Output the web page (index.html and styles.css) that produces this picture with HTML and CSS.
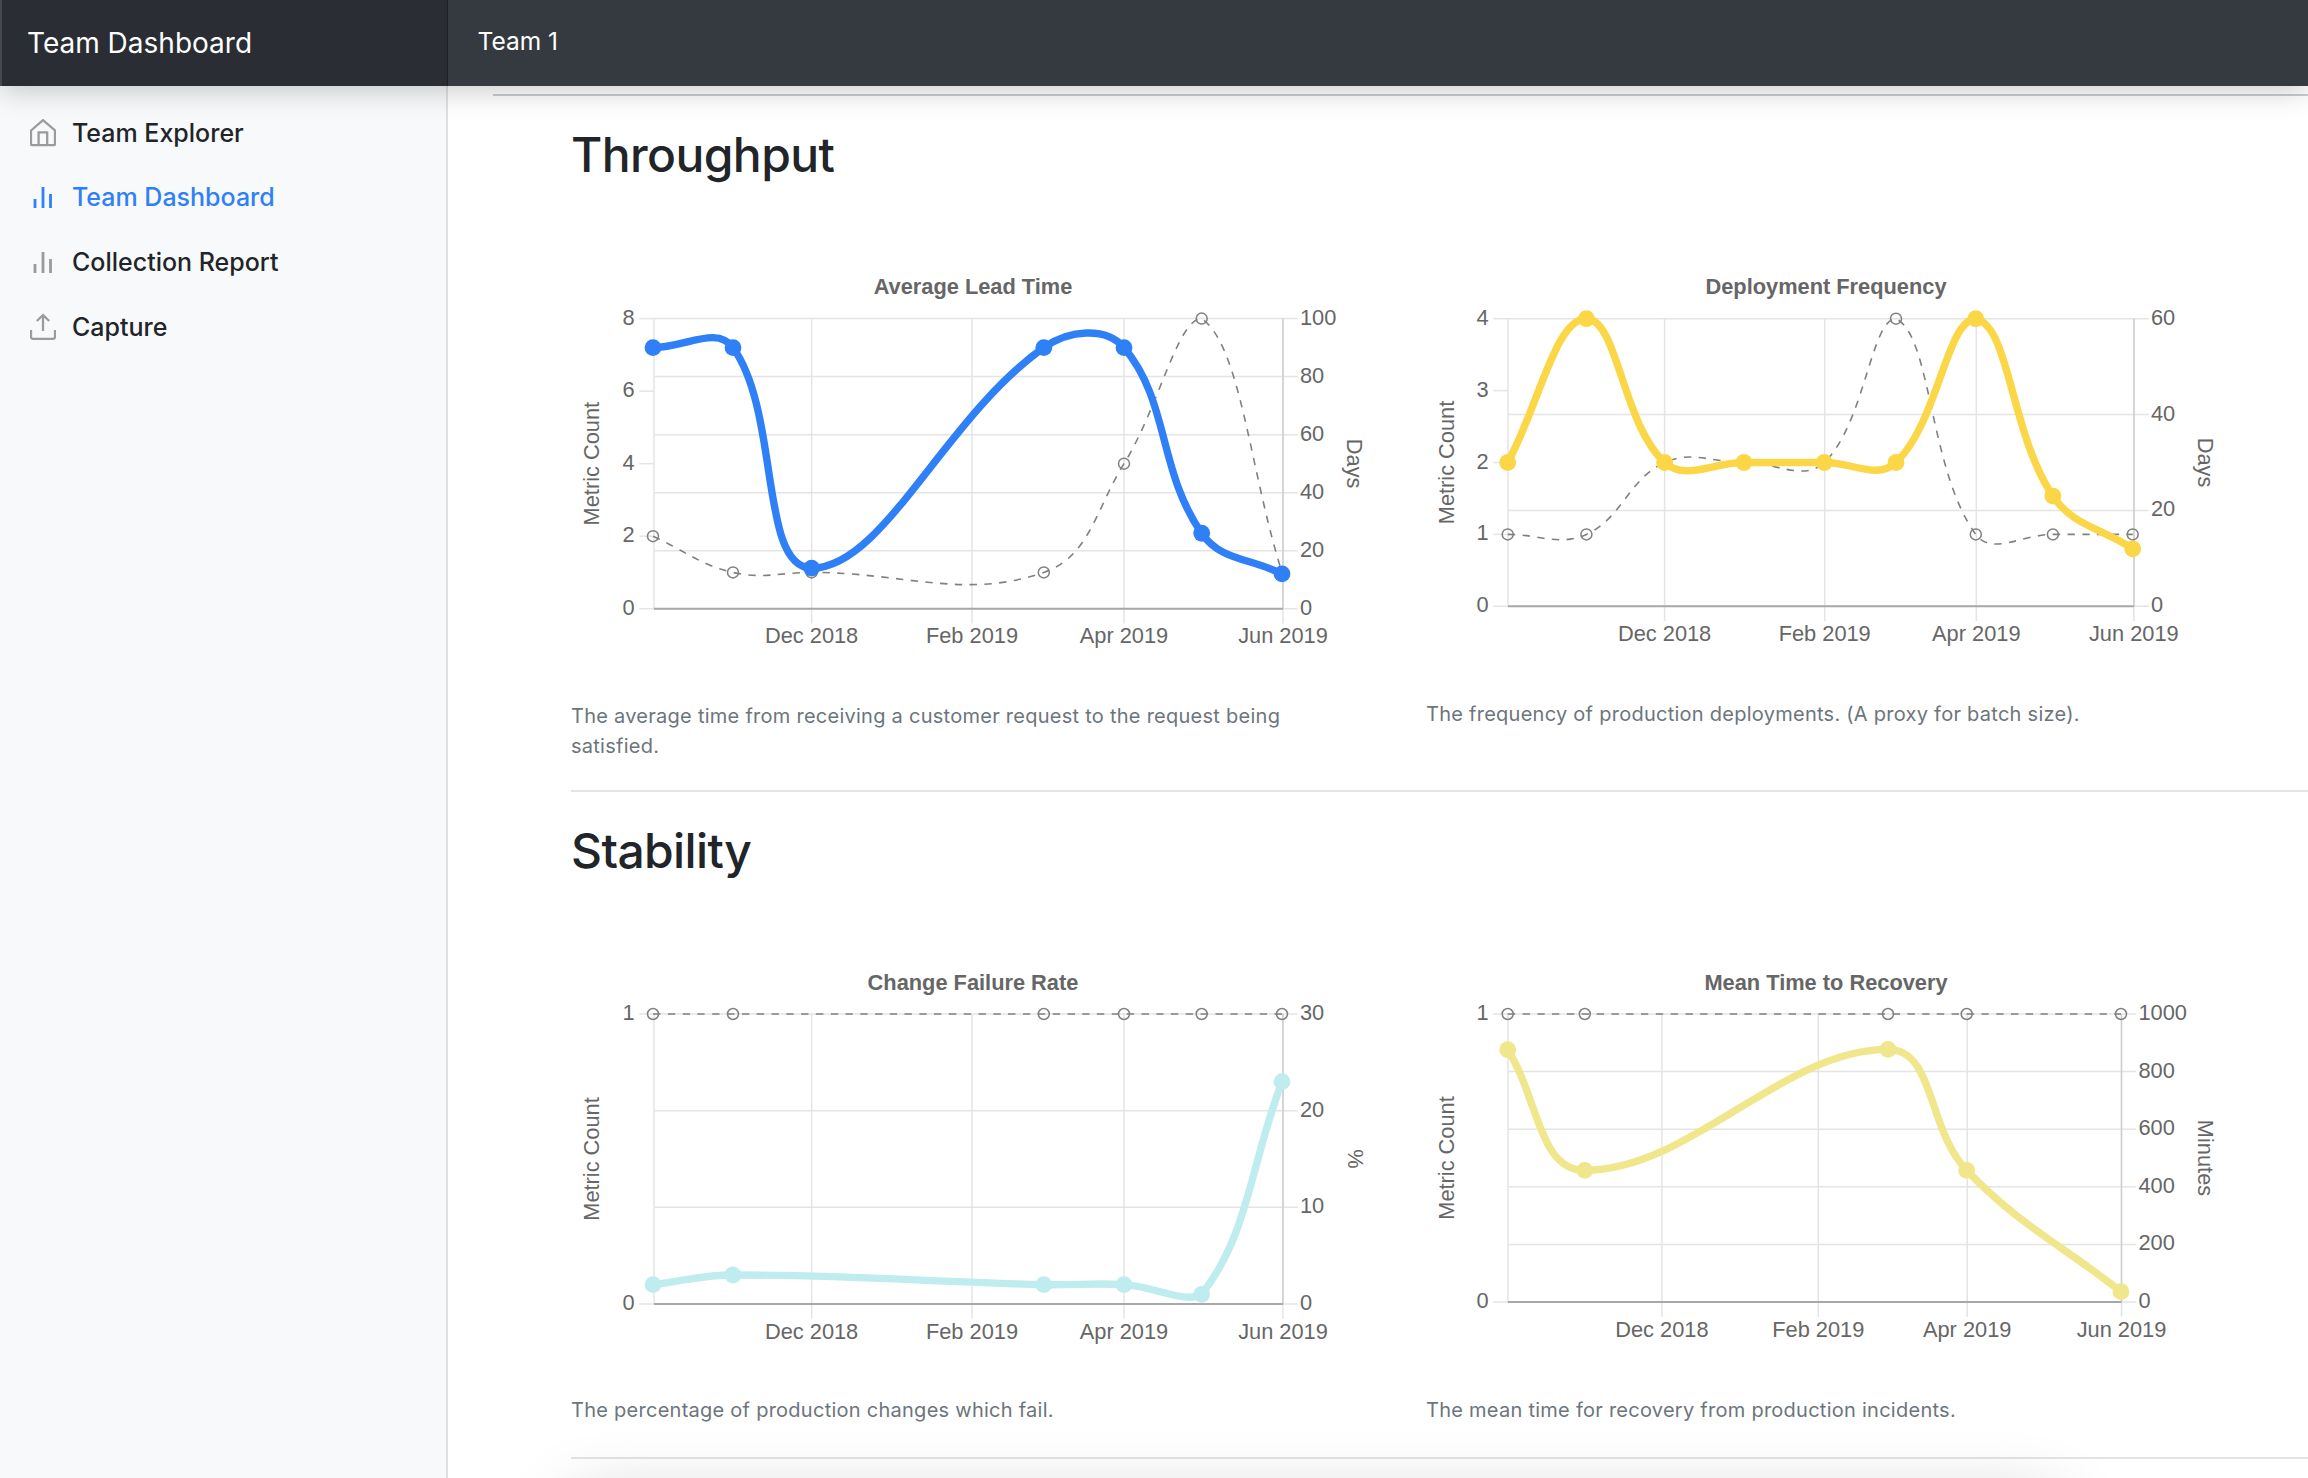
FILE: index.html
```html
<!DOCTYPE html>
<html lang="en">
	<head>
		<meta charset="UTF-8" />
		<title>Team Dashboard</title>
		<link rel="stylesheet" href="styles.css">
	</head>
	<body>
		<header class="topbar">
			<div class="brand">Team Dashboard</div>
			<div class="team-name">Team 1</div>
		</header>

		<div class="layout">
			<aside class="sidebar">
				<a class="nav-link" href="#">
					<svg class="nav-icon" viewBox="0 0 26 28"><path d="M1 11.5 13 1.2 25 11.5V25a1.2 1.2 0 0 1-1.2 1.2H2.2A1.2 1.2 0 0 1 1 25Z" /><path d="M8.6 26V13.4h8.6V26" /></svg>
					Team Explorer
				</a>
				<a class="nav-link active" href="#">
					<svg class="nav-icon" viewBox="0 0 26 28"><path class="bars" d="M5 25v-9M13 25V4M20.5 25V11" /></svg>
					Team Dashboard
				</a>
				<a class="nav-link" href="#">
					<svg class="nav-icon" viewBox="0 0 26 28"><path class="bars" d="M5 25v-9M13 25V4M20.5 25V11" /></svg>
					Collection Report
				</a>
				<a class="nav-link capture" href="#">
					<svg class="nav-icon" viewBox="0 0 26 28"><path d="M1 17v7a1.8 1.8 0 0 0 1.8 1.8h20.4A1.8 1.8 0 0 0 25 24v-7" /><path d="M13 18V2M6.8 8 13 2l6.2 6" /></svg>
					Capture
				</a>
			</aside>

			<main class="content">
				<div class="top-rule"></div>

				<section class="metrics">
					<h2>Throughput</h2>
					<div class="chart-row">
						<div class="chart-col">
							<div id="lead-time"></div>
							<p class="description">The average time from receiving a customer request to the request being satisfied.</p>
						</div>
						<div class="chart-col">
							<div id="deploy-freq"></div>
							<p class="description">The frequency of production deployments. (A proxy for batch size).</p>
						</div>
					</div>
				</section>
				<hr />

				<section class="metrics stability">
					<h2>Stability</h2>
					<div class="chart-row">
						<div class="chart-col">
							<div id="failure-rate"></div>
							<p class="description">The percentage of production changes which fail.</p>
						</div>
						<div class="chart-col">
							<div id="recovery"></div>
							<p class="description">The mean time for recovery from production incidents.</p>
						</div>
					</div>
				</section>
				<hr />
			</main>
		</div>

		<div class="next-card"></div>

		<script src="charts.js"></script>
	</body>
</html>
```
FILE: styles.css
```css
body {
	margin: 0;
	height: 100vh;
	overflow: hidden;
	font-family: Inter, "Noto Sans", sans-serif;
	color: #212529;
	background: #fff;
}
.topbar {
	position: relative;
	z-index: 2;
	display: flex;
	height: 86px;
	background: #343a40;
	color: #fff;
	box-shadow: 0 4px 30px rgba(0, 0, 0, 0.22);
}
.brand {
	box-sizing: border-box;
	width: 448px;
	padding: 27px 0 0 25px;
	font-size: 28px;
	line-height: 33px;
	background: #2a2d33;
	border-left: 2px solid #45494f;
	box-shadow: inset -1px 0 0 rgba(0, 0, 0, 0.25);
}
.team-name {
	padding: 25px 0 0 29.5px;
	font-size: 24.5px;
	line-height: 32px;
}
.layout {
	display: flex;
	height: calc(100vh - 86px);
}
.sidebar {
	box-sizing: border-box;
	flex: 0 0 448px;
	padding-top: 15px;
	background: #f8f9fa;
	border-right: 2px solid #dee0e2;
}
.nav-link {
	display: flex;
	align-items: center;
	gap: 16px;
	height: 64.3px;
	padding-left: 30px;
	font-size: 25px;
	font-weight: 500;
	color: #212529;
	text-decoration: none;
}
.nav-link.active {
	color: #2f80f7;
}
.nav-link.capture {
	margin-top: 1px;
}
.nav-icon {
	width: 26px;
	height: 28px;
	flex: none;
	fill: none;
	stroke: #9b9b9b;
	stroke-width: 2.3;
}
.nav-icon .bars {
	stroke-width: 2.8;
}
.active .nav-icon {
	stroke: #2f80f7;
}
.content {
	flex: 1;
	min-width: 0;
	padding-left: 123px;
}
.top-rule {
	height: 2px;
	margin: 8px 0 0 -78px;
	background: #c9ced3;
}
.metrics {
	padding-top: 29px;
}
.metrics h2 {
	margin: 0 0 78px;
	font-size: 48px;
	line-height: 60px;
	font-weight: 500;
	letter-spacing: -0.6px;
}
.chart-row {
	display: grid;
	grid-template-columns: 855px 855px;
	align-items: start;
}
.chart-col svg {
	display: block;
}
.description {
	max-width: 760px;
	margin: 37px 0 0;
	font-size: 20px;
	line-height: 29.5px;
	letter-spacing: 0.26px;
	color: #6c757d;
}
hr {
	height: 2px;
	margin: 29px 0 0;
	border: 0;
	background: #e3e4e5;
}
.stability + hr {
	margin-top: 31px;
}
.grid-line {
	stroke: #e4e4e4;
	stroke-width: 1.5;
}
.axis-line {
	stroke: #a8a8a8;
	stroke-width: 2;
}
.right-axis {
	stroke: #cfcfcf;
	stroke-width: 1.5;
}
.tick,
.axis-title,
.chart-title {
	font-family: "Liberation Sans", Arial, sans-serif;
	fill: #666;
	font-size: 21.8px;
}
.tick {
	dominant-baseline: central;
}
.axis-title {
	text-anchor: middle;
	dominant-baseline: central;
}
.chart-title {
	font-weight: 700;
	text-anchor: middle;
	dominant-baseline: central;
}
.compare-line {
	fill: none;
	stroke: #808080;
	stroke-width: 1.6;
	stroke-dasharray: 7.4 7.4;
}
.compare-point {
	fill: none;
	stroke: #808080;
	stroke-width: 1.5;
}
.main-line {
	fill: none;
	stroke-width: 7.4;
}
.next-card {
	position: fixed;
	left: 570px;
	right: 250px;
	top: 1500px;
	height: 200px;
	background: #fff;
	box-shadow: 0 0 70px rgba(0, 0, 0, 0.2);
}
```
FILE: charts.js
```js
// plot box and points are in canvas pixels, values are on the axes named below
const charts = [
	{
		id: "lead-time",
		title: "Average Lead Time",
		size: [804, 402],
		plot: { left: 83, right: 712, top: 55.6, bottom: 345.7 },
		months: [240.6, 401, 553, 712],
		xs: [82, 162, 240.6, 472.8, 553, 630.7, 711],
		leftTicks: [0, 2, 4, 6, 8],
		rightTicks: [0, 20, 40, 60, 80, 100],
		rightTitle: "Days",
		rightTitleX: 783,
		color: "#2f80f7",
		main: [90, 90, 14, 90, 90, 26, 12],
		compare: [2, 1, 1, 1, 4, 8, 1],
	},
	{
		id: "deploy-freq",
		title: "Deployment Frequency",
		size: [800, 400],
		plot: { left: 82, right: 708, top: 55.7, bottom: 343.3 },
		months: [238.6, 398.7, 550.3, 707.8],
		xs: [81.7, 160.4, 238.6, 317.9, 398.2, 470, 549.8, 626.9, 706.7],
		leftTicks: [0, 1, 2, 3, 4],
		rightTicks: [0, 20, 40, 60],
		rightTitle: "Days",
		rightTitleX: 779,
		color: "#fbd748",
		main: [30, 60, 30, 30, 30, 30, 60, 23, 12],
		compare: [1, 1, 2, 2, 2, 4, 1, 1, 1],
	},
	{
		id: "failure-rate",
		title: "Change Failure Rate",
		size: [804, 400],
		plot: { left: 83, right: 712, top: 55, bottom: 345 },
		months: [240.6, 401, 553, 712],
		xs: [82, 162, 472.8, 553, 630.7, 711],
		leftTicks: [0, 1],
		rightTicks: [0, 10, 20, 30],
		rightTitle: "%",
		rightTitleX: 784,
		color: "#bfecee",
		main: [2, 3, 2, 2, 1, 23],
		compare: [1, 1, 1, 1, 1, 1],
	},
	{
		id: "recovery",
		title: "Mean Time to Recovery",
		size: [800, 400],
		plot: { left: 82, right: 695.5, top: 55, bottom: 343 },
		months: [235.9, 392.3, 541.2, 695.5],
		xs: [81.7, 158.8, 462, 540.7, 695],
		leftTicks: [0, 1],
		rightTicks: [0, 200, 400, 600, 800, 1000],
		rightTitle: "Minutes",
		rightTitleX: 779,
		color: "#f0e68c",
		main: [876, 457, 877, 457, 36],
		compare: [1, 1, 1, 1, 1],
	},
];

const monthNames = ["Dec 2018", "Feb 2019", "Apr 2019", "Jun 2019"];
const tickLength = 14.7;
const labelLift = 1.5;

// same spline as the chart library, tension 0.4
function smoothPath(points, plot) {
	let d = "M" + points[0].x + " " + points[0].y;
	const controls = points.map((p, i) => {
		const prev = points[i - 1] || p;
		const next = points[i + 1] || p;
		const d01 = Math.hypot(p.x - prev.x, p.y - prev.y);
		const d12 = Math.hypot(next.x - p.x, next.y - p.y);
		const total = d01 + d12 || 1;
		const clamp = (y) => Math.min(plot.bottom, Math.max(plot.top, y));
		return {
			before: {
				x: p.x - (0.4 * d01 * (next.x - prev.x)) / total,
				y: clamp(p.y - (0.4 * d01 * (next.y - prev.y)) / total),
			},
			after: {
				x: p.x + (0.4 * d12 * (next.x - prev.x)) / total,
				y: clamp(p.y + (0.4 * d12 * (next.y - prev.y)) / total),
			},
		};
	});
	for (let i = 1; i < points.length; i++) {
		const a = controls[i - 1].after;
		const b = controls[i].before;
		d += ` C${a.x} ${a.y} ${b.x} ${b.y} ${points[i].x} ${points[i].y}`;
	}
	return d;
}

function line(x1, y1, x2, y2, cls) {
	return `<line class="${cls}" x1="${x1}" y1="${y1}" x2="${x2}" y2="${y2}" />`;
}

function drawChart(c) {
	const p = c.plot;
	const height = p.bottom - p.top;
	const leftMax = c.leftTicks[c.leftTicks.length - 1];
	const rightMax = c.rightTicks[c.rightTicks.length - 1];
	const leftY = (v) => p.bottom - (v / leftMax) * height;
	const rightY = (v) => p.bottom - (v / rightMax) * height;
	const midY = (p.top + p.bottom) / 2;
	let out = "";

	out += `<text class="chart-title" x="${c.size[0] / 2}" y="23.5">${c.title}</text>`;

	out += line(p.left, p.top, p.left, p.bottom, "grid-line");
	c.months.forEach((x, i) => {
		out += line(x, p.top, x, p.bottom + tickLength, "grid-line");
		out += `<text class="tick" text-anchor="middle" x="${x}" y="${p.bottom + 27}">${monthNames[i]}</text>`;
	});

	c.leftTicks.forEach((v) => {
		const y = leftY(v);
		out += line(p.left - tickLength, y, p.left, y, "grid-line");
		out += `<text class="tick" text-anchor="end" x="${p.left - 19.5}" y="${y - labelLift}">${v}</text>`;
	});
	c.rightTicks.forEach((v) => {
		const y = rightY(v);
		out += line(p.left, y, p.right + tickLength, y, "grid-line");
		out += `<text class="tick" x="${p.right + 17}" y="${y - labelLift}">${v}</text>`;
	});
	out += line(p.right, p.top, p.right, p.bottom, "right-axis");
	out += line(p.left, p.bottom, p.right, p.bottom, "axis-line");

	out += `<text class="axis-title" transform="translate(20 ${midY}) rotate(-90)">Metric Count</text>`;
	out += `<text class="axis-title" transform="translate(${c.rightTitleX} ${midY}) rotate(90)">${c.rightTitle}</text>`;

	const comparePoints = c.compare.map((v, i) => ({ x: c.xs[i], y: leftY(v) }));
	const mainPoints = c.main.map((v, i) => ({ x: c.xs[i], y: rightY(v) }));

	out += `<path class="compare-line" d="${smoothPath(comparePoints, p)}" />`;
	comparePoints.forEach((pt) => {
		out += `<circle class="compare-point" cx="${pt.x}" cy="${pt.y}" r="5.5" />`;
	});
	out += `<path class="main-line" stroke="${c.color}" d="${smoothPath(mainPoints, p)}" />`;
	mainPoints.forEach((pt) => {
		out += `<circle fill="${c.color}" cx="${pt.x}" cy="${pt.y}" r="8.4" />`;
	});

	document.getElementById(c.id).innerHTML =
		`<svg width="${c.size[0]}" height="${c.size[1]}">${out}</svg>`;
}

charts.forEach(drawChart);
```
